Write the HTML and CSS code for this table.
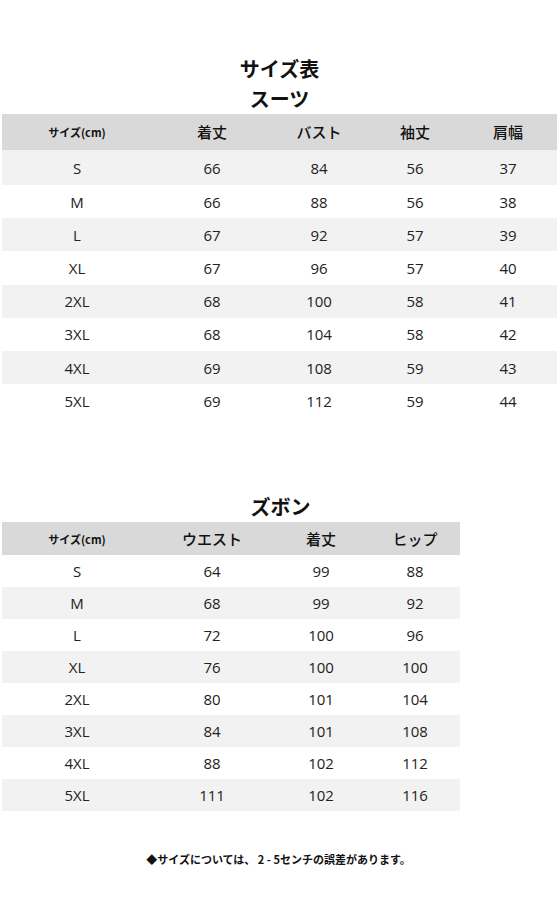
FILE: index.html
```html
<!DOCTYPE html>
<html lang="ja">
<head>
<meta charset="utf-8">
<title>サイズ表</title>
<link rel="stylesheet" href="styles.css">
</head>
<body>
<div class="page">
  <h1 class="title">サイズ表</h1>
  <h2 class="subtitle">スーツ</h2>
  <div class="table suits">
    <div class="row head"><div class="c small">サイズ(cm)</div><div class="c">着丈</div><div class="c">バスト</div><div class="c">袖丈</div><div class="c">肩幅</div></div>
    <div class="row"><div class="c">S</div><div class="c">66</div><div class="c">84</div><div class="c">56</div><div class="c">37</div></div>
    <div class="row"><div class="c">M</div><div class="c">66</div><div class="c">88</div><div class="c">56</div><div class="c">38</div></div>
    <div class="row"><div class="c">L</div><div class="c">67</div><div class="c">92</div><div class="c">57</div><div class="c">39</div></div>
    <div class="row"><div class="c">XL</div><div class="c">67</div><div class="c">96</div><div class="c">57</div><div class="c">40</div></div>
    <div class="row"><div class="c">2XL</div><div class="c">68</div><div class="c">100</div><div class="c">58</div><div class="c">41</div></div>
    <div class="row"><div class="c">3XL</div><div class="c">68</div><div class="c">104</div><div class="c">58</div><div class="c">42</div></div>
    <div class="row"><div class="c">4XL</div><div class="c">69</div><div class="c">108</div><div class="c">59</div><div class="c">43</div></div>
    <div class="row"><div class="c">5XL</div><div class="c">69</div><div class="c">112</div><div class="c">59</div><div class="c">44</div></div>
  </div>

  <h2 class="subtitle pants-title">ズボン</h2>
  <div class="table pants">
    <div class="row head"><div class="c small">サイズ(cm)</div><div class="c">ウエスト</div><div class="c">着丈</div><div class="c">ヒップ</div></div>
    <div class="row"><div class="c">S</div><div class="c">64</div><div class="c">99</div><div class="c">88</div></div>
    <div class="row"><div class="c">M</div><div class="c">68</div><div class="c">99</div><div class="c">92</div></div>
    <div class="row"><div class="c">L</div><div class="c">72</div><div class="c">100</div><div class="c">96</div></div>
    <div class="row"><div class="c">XL</div><div class="c">76</div><div class="c">100</div><div class="c">100</div></div>
    <div class="row"><div class="c">2XL</div><div class="c">80</div><div class="c">101</div><div class="c">104</div></div>
    <div class="row"><div class="c">3XL</div><div class="c">84</div><div class="c">101</div><div class="c">108</div></div>
    <div class="row"><div class="c">4XL</div><div class="c">88</div><div class="c">102</div><div class="c">112</div></div>
    <div class="row"><div class="c">5XL</div><div class="c">111</div><div class="c">102</div><div class="c">116</div></div>
  </div>

  <p class="note">◆サイズについては、 2 - 5センチの誤差があります。</p>
</div>
</body>
</html>
```

FILE: styles.css
```css
html, body {
  margin: 0;
  padding: 0;
  background: #ffffff;
}
.page {
  width: 557px;
  padding-top: 54px;
  font-family: "Open Sans", "Noto Sans CJK JP", sans-serif;
  color: #222222;
}
.title, .subtitle {
  margin: 0;
  text-align: center;
  font-family: "Noto Sans CJK JP", sans-serif;
  font-weight: 700;
  font-size: 20px;
  line-height: 30px;
  color: #111111;
}
.title { padding-left: 2px; }
.subtitle { padding-left: 2px; }
.pants-title {
  margin-top: 75px;
  padding-left: 4px;
}
.table {
  margin-left: 2px;
}
.suits { width: 555px; }
.pants { width: 458px; }
.row {
  display: grid;
  align-items: center;
  font-size: 15px;
}
.suits .row {
  grid-template-columns: 150px 120px 94px 98px 88px;
  height: 33.2px;
}
.suits .row:nth-child(2) { height: 35px; }
.pants .row {
  grid-template-columns: 150px 120px 98px 90px;
  height: 32px;
}
.suits .row.head { height: 36px; }
.pants .row.head { height: 33px; }
.row.head {
  background: #d9d9d9;
  font-family: "Noto Sans CJK JP", sans-serif;
  font-size: 15px;
  font-weight: 500;
  color: #111111;
}
.suits .row:nth-child(2n) { background: #f2f2f2; }
.pants .row:nth-child(2n+3) { background: #f2f2f2; }
.c {
  text-align: center;
  line-height: 20px;
}
.c.small {
  font-size: 11px;
  font-weight: 700;
}
.note {
  margin: 38px 0 0 0;
  text-align: center;
  font-family: "Noto Sans CJK JP", sans-serif;
  font-size: 11px;
  font-weight: 700;
  line-height: 20px;
  color: #111111;
}
```
